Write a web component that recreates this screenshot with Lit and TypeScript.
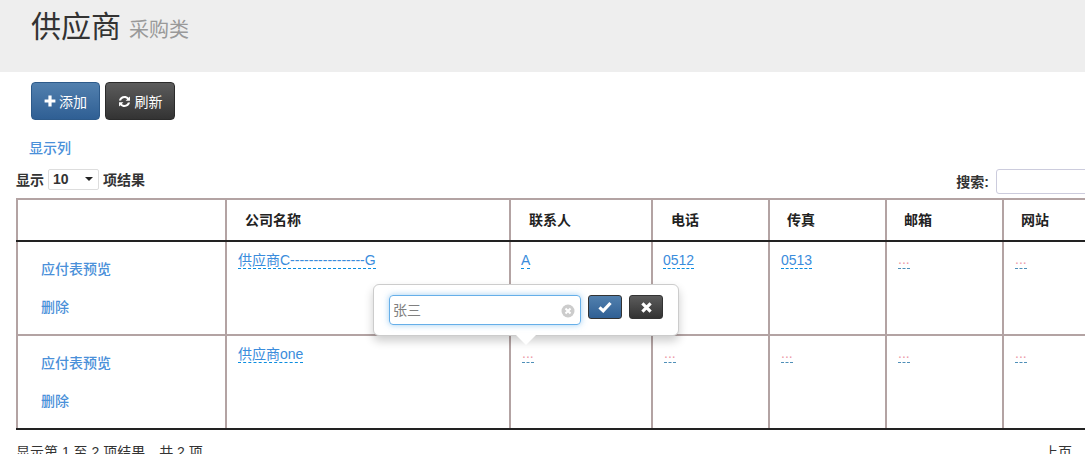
import { LitElement, html, css } from "lit";
import { customElement } from "lit/decorators.js";

const plus = html`<svg class="ic" viewBox="0 0 12 12" width="12" height="12"><path fill="#fff" d="M4.400 0.600h3.200v3.800h3.800v3.200H7.600v3.800H4.400V7.600H0.600V4.400h3.800z"/></svg>`;
const refresh = html`<svg class="ic" viewBox="0 0 14 14" width="13" height="13"><path fill="#fff" d="M7 1c1.700 0 3.300.7 4.400 1.900l1.500-1.400v4.700H8.200l1.700-1.700C9.100 3.800 8.100 3.300 7 3.300c-1.700 0-3.100 1-3.600 2.500H1C1.500 3.100 4 1 7 1zM1.100 7.900h4.700L4.100 9.600c.8.800 1.800 1.200 2.900 1.200 1.700 0 3.100-1 3.600-2.600H13C12.500 10.900 10 13 7 13c-1.700 0-3.300-.7-4.400-1.900l-1.500 1.400z"/></svg>`;
const ok = html`<svg viewBox="0 0 14 12" width="14" height="12"><path fill="none" stroke="#fff" stroke-width="3.200" d="M1.500 6.300l3.700 3.500L12.500 2"/></svg>`;
const remove = html`<svg viewBox="0 0 12 12" width="11" height="11"><path fill="none" stroke="#fff" stroke-width="3.400" d="M1.500 1.500l9 9M10.500 1.500l-9 9"/></svg>`;

@customElement("app-root")
export class AppRoot extends LitElement {
  static styles = css`
    :host {
      display: block;
      position: relative;
      width: 1085px;
      height: 454px;
      overflow: hidden;
      background: #fff;
      font-family: "Liberation Sans", "Noto Sans CJK SC", sans-serif;
      font-size: 14px;
      color: #333;
    }
    .jumbo {
      height: 72px;
      box-sizing: border-box;
      background: #eee;
      padding: 10px 0 0 31px;
      display: flex;
      align-items: baseline;
      gap: 8px;
    }
    .jumbo h1 { margin: 0; font-size: 30px; font-weight: 400; line-height: 34px; color: #333; }
    .jumbo small { font-size: 20px; color: #999; }
    .toolbar { display: flex; gap: 5px; padding: 10px 0 0 31px; }
    .btn {
      box-sizing: border-box;
      display: flex;
      align-items: center;
      justify-content: center;
      gap: 3px;
      height: 38px;
      border-radius: 4px;
      color: #fff;
      font-size: 14px;
      border: 1px solid;
      padding: 0;
    }
    .blue { background: linear-gradient(#5280ae, #2f5f94); border-color: #2d5a8a; }
    .dark { background: linear-gradient(#5c5c5c, #333); border-color: #2b2b2b; }
    .add { width: 69px; }
    .refresh { width: 70px; gap: 4px; }
    .ic { flex: none; }
    .cols { padding: 18px 0 0 29px; line-height: 20px; }
    .cols a { color: #4a90d9; font-weight: 500; }
    .bar {
      display: flex;
      justify-content: space-between;
      align-items: center;
      height: 22px;
      margin-top: 10px;
      padding-left: 16px;
      font-weight: 700;
      font-size: 14px;
      color: #333;
    }
    .len { display: flex; align-items: center; gap: 4px; }
    .sel {
      box-sizing: border-box;
      width: 51px;
      height: 21px;
      border: 1px solid #ddd;
      border-radius: 2px;
      display: flex;
      align-items: center;
      justify-content: space-between;
      padding: 0 5px 0 4px;
      font-size: 14px;
    }
    .caret { width: 0; height: 0; border: 4px solid transparent; border-top: 4px solid #222; border-bottom: 0; }
    .search { display: flex; align-items: center; gap: 7px; position: relative; top: 2px; margin-right: -21px; }
    .search .box {
      box-sizing: border-box;
      width: 110px;
      height: 25px;
      border: 1px solid #ccd;
      border-radius: 3px 0 0 3px;
    }
    table {
      margin: 8px 0 0 16px;
      border-collapse: collapse;
      table-layout: fixed;
      width: 1199px;
    }
    th, td {
      border: 2px solid #b3a3a3;
      box-sizing: border-box;
      vertical-align: top;
      padding: 0;
    }
    thead th {
      height: 42px;
      font-weight: 700;
      font-size: 14px;
      text-align: left;
      vertical-align: middle;
      color: #222;
      border-bottom: 2px solid #222;
      padding-bottom: 2px;
    }
    tbody td { height: 94px; }
    tbody tr:last-child td { border-bottom: 2px solid #222; }
    .h1 { padding-left: 18px; }
    .h2 { padding-left: 18px; }
    .h3 { padding-left: 17px; }
    .ops { padding: 17px 0 0 23px; display: flex; flex-direction: column; gap: 18px; }
    .ops a { color: #4a90d9; line-height: 20px; font-size: 14px; font-weight: 500; }
    .ed { padding: 8px 0 0 11px; line-height: 20px; }
    .ed.tight { padding-left: 10px; }
    .ed a { color: #3a8cdc; border-bottom: 1px dashed #0a8de0; font-size: 14px; }
    .empty { display: flex; padding: 14px 0 0 11px; }
    .empty a {
      color: #ec9aa8;
      border-bottom: 1px dashed #4f8fb8;
      font-size: 14px;
      line-height: 6px;
      height: 12px;
    }
    .foot {
      display: flex;
      justify-content: space-between;
      padding: 12px 13px 0 16px;
      font-size: 14px;
      color: #333;
      line-height: 20px;
    }
    .pop {
      position: absolute;
      left: 373px;
      top: 284px;
      width: 306px;
      height: 52px;
      box-sizing: border-box;
      background: #fff;
      border: 1px solid #ccc;
      border-radius: 6px;
      box-shadow: 0 5px 10px rgba(0, 0, 0, 0.2);
      display: flex;
      align-items: flex-start;
      gap: 7px;
      padding: 10px 0 0 15px;
    }
    .pop::after {
      content: "";
      position: absolute;
      left: 142px;
      bottom: -10px;
      width: 0;
      height: 0;
      border: 10px solid transparent;
      border-top-color: #fff;
      border-bottom: 0;
    }
    .inp {
      box-sizing: border-box;
      position: relative;
      width: 192px;
      height: 30px;
      border: 1px solid #66afe9;
      border-radius: 4px;
      box-shadow: 0 0 6px rgba(102, 175, 233, 0.6);
      display: flex;
      align-items: center;
      padding: 0 0 2px 3px;
      color: #808080;
      font-size: 14px;
    }
    .clear { position: absolute; right: 5px; top: 8px; }
    .mini {
      box-sizing: border-box;
      width: 34px;
      height: 24px;
      border-radius: 3px;
      border: 1px solid;
      display: flex;
      align-items: center;
      justify-content: center;
    }
  `;

  render() {
    const empty = html`<td><div class="empty"><a>...</a></div></td>`;
    const ops = html`<td><div class="ops"><a>应付表预览</a><a>删除</a></div></td>`;
    return html`
      <div class="jumbo"><h1>供应商</h1><small>采购类</small></div>
      <div class="toolbar">
        <div class="btn blue add">${plus}<span>添加</span></div>
        <div class="btn dark refresh">${refresh}<span>刷新</span></div>
      </div>
      <div class="cols"><a>显示列</a></div>
      <div class="bar">
        <div class="len"><span>显示</span><div class="sel"><span>10</span><i class="caret"></i></div><span>项结果</span></div>
        <div class="search"><span>搜索:</span><div class="box"></div></div>
      </div>
      <table>
        <colgroup>
          <col style="width:209px" /><col style="width:284px" /><col style="width:142px" />
          <col style="width:117px" /><col style="width:117px" /><col style="width:117px" /><col style="width:213px" />
        </colgroup>
        <thead>
          <tr>
            <th></th><th class="h1">公司名称</th><th class="h2">联系人</th><th class="h2">电话</th>
            <th class="h3">传真</th><th class="h3">邮箱</th><th class="h3">网站</th>
          </tr>
        </thead>
        <tbody>
          <tr>
            ${ops}
            <td><div class="ed"><a>供应商C----------------G</a></div></td>
            <td><div class="ed tight"><a>A</a></div></td>
            <td><div class="ed tight"><a>0512</a></div></td>
            <td><div class="ed"><a>0513</a></div></td>
            ${empty}${empty}
          </tr>
          <tr>
            ${ops}
            <td><div class="ed"><a>供应商one</a></div></td>
            ${empty}${empty}${empty}${empty}${empty}
          </tr>
        </tbody>
      </table>
      <div class="foot"><span>显示第 1 至 2 项结果，共 2 项</span><span>上页</span></div>
      <div class="pop">
        <div class="inp">张三
          <svg class="clear" viewBox="0 0 14 14" width="14" height="14"><circle cx="7" cy="7" r="6.500" fill="#ccc"/><path stroke="#fff" stroke-width="2" d="M4.500 4.500l5 5M9.500 4.500l-5 5"/></svg>
        </div>
        <div class="mini blue">${ok}</div>
        <div class="mini dark">${remove}</div>
      </div>
    `;
  }
}
